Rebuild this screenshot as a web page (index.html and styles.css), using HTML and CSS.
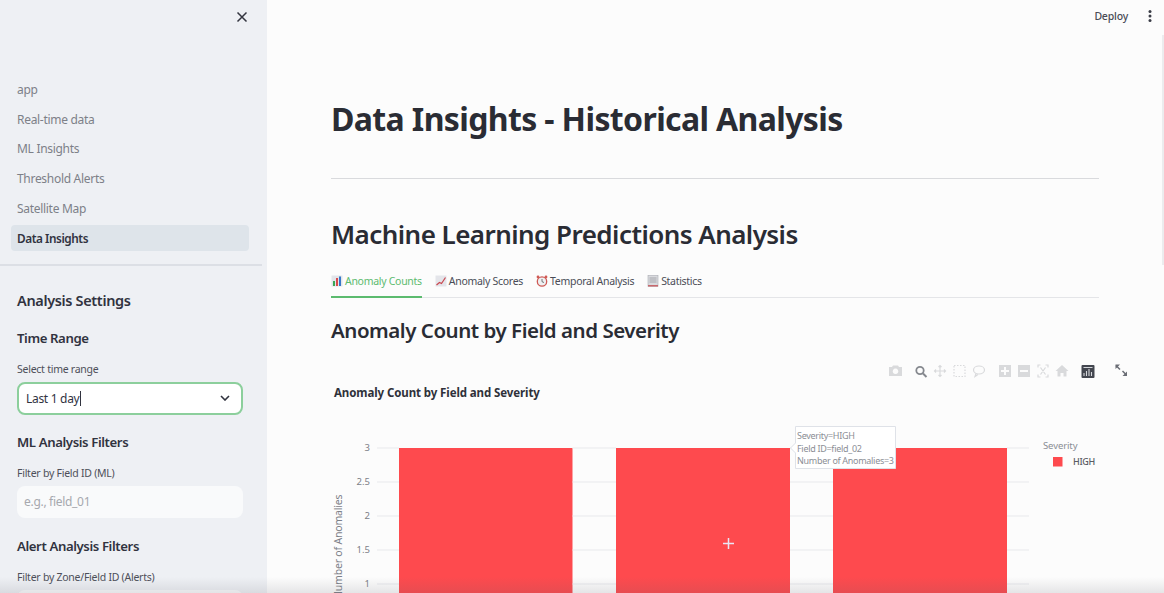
FILE: index.html
```html
<!DOCTYPE html>
<html lang="en">
<head>
<meta charset="utf-8">
<title>Data Insights</title>
<link rel="stylesheet" href="styles.css">
</head>
<body>
<div class="app">
  <aside class="sidebar">
    <div class="side-top">
      <svg class="close" viewBox="0 0 12 12" width="12" height="12"><path d="M1.500 1.500l9 9M10.500 1.500l-9 9" stroke="#33353f" stroke-width="1.500" fill="none"/></svg>
    </div>
    <nav class="nav">
      <a class="nav-item">app</a>
      <a class="nav-item">Real-time data</a>
      <a class="nav-item">ML Insights</a>
      <a class="nav-item">Threshold Alerts</a>
      <a class="nav-item">Satellite Map</a>
      <a class="nav-item active">Data Insights</a>
    </nav>
    <div class="side-rule"></div>
    <div class="side-body">
      <h2 class="side-h2">Analysis Settings</h2>
      <h3 class="side-h3 first">Time Range</h3>
      <div class="field-label">Select time range</div>
      <div class="select"><span class="select-value">Last 1 day</span><span class="caret"></span>
        <svg class="chev" viewBox="0 0 10 6" width="10" height="6"><path d="M1 1l4 4 4-4" stroke="#31333f" stroke-width="1.600" fill="none"/></svg>
      </div>
      <h3 class="side-h3">ML Analysis Filters</h3>
      <div class="field-label">Filter by Field ID (ML)</div>
      <div class="input">e.g., field_01</div>
      <h3 class="side-h3">Alert Analysis Filters</h3>
      <div class="field-label">Filter by Zone/Field ID (Alerts)</div>
      <div class="input"></div>
    </div>
  </aside>
  <main class="main">
    <header class="topbar">
      <span class="deploy">Deploy</span>
      <svg class="kebab" viewBox="0 0 4 14" width="4" height="14"><circle cx="2" cy="2.500" r="1.500"/><circle cx="2" cy="7" r="1.500"/><circle cx="2" cy="11.500" r="1.500"/></svg>
    </header>
    <div class="content">
      <h1 class="title">Data Insights - Historical Analysis</h1>
      <hr class="rule">
      <h2 class="section">Machine Learning Predictions Analysis</h2>
      <div class="tabs">
        <div class="tab on">
          <svg viewBox="0 0 12 12" width="12" height="12"><rect x=".5" y=".5" width="11" height="11" fill="#e2e5ea"/><rect x="2" y="6" width="2" height="5" fill="#3aa655"/><rect x="5" y="3" width="2" height="8" fill="#d9484c"/><rect x="8" y="1.500" width="2" height="9.500" fill="#3578c9"/></svg>
          Anomaly Counts</div>
        <div class="tab">
          <svg viewBox="0 0 12 12" width="12" height="12"><rect x=".5" y=".5" width="11" height="11" fill="#e4e5ea"/><path d="M1.500 10l3-2.500 2 1L10.500 2.500" stroke="#c9474f" stroke-width="1.200" fill="none"/></svg>
          Anomaly Scores</div>
        <div class="tab">
          <svg viewBox="0 0 12 12" width="12" height="12"><circle cx="6" cy="6.500" r="4.700" fill="#eef0f2" stroke="#cf5a55" stroke-width="1.300"/><path d="M6 4v2.700l2 .8" stroke="#555" stroke-width=".8" fill="none"/><circle cx="2" cy="2" r="1.400" fill="#cf5a55"/><circle cx="10" cy="2" r="1.400" fill="#cf5a55"/></svg>
          Temporal Analysis</div>
        <div class="tab">
          <svg viewBox="0 0 12 12" width="12" height="12"><rect x="1" y=".5" width="10" height="11" fill="#d9dade" stroke="#a9abb2" stroke-width=".6"/><path d="M2.500 3h7M2.500 5h7M2.500 7h7" stroke="#8f9199" stroke-width=".7"/><rect x="1" y="10" width="10" height="1.500" fill="#c9686c"/></svg>
          Statistics</div>
      </div>
      <h3 class="sub">Anomaly Count by Field and Severity</h3>
      <div class="chart">
        <svg class="plot" width="800" height="240" viewBox="331 355 800 240">
          <g class="bars">
            <rect x="399" y="448" width="173.500" height="150"/>
            <rect x="616" y="448" width="174" height="150"/>
            <rect x="833" y="448" width="174" height="150"/>
          </g>
          <g class="grid">
            <path d="M377 448H399M572.500 448H616M790 448H833M1007 448H1029"/>
            <path d="M377 482H399M572.500 482H616M790 482H833M1007 482H1029"/>
            <path d="M377 516H399M572.500 516H616M790 516H833M1007 516H1029"/>
            <path d="M377 550H399M572.500 550H616M790 550H833M1007 550H1029"/>
            <path d="M377 584H399M572.500 584H616M790 584H833M1007 584H1029"/>
          </g>
          <text class="chart-title" x="334" y="397">Anomaly Count by Field and Severity</text>
          <g class="ticks">
            <text x="370" y="451">3</text>
            <text x="370" y="485">2.5</text>
            <text x="370" y="519">2</text>
            <text x="370" y="553">1.5</text>
            <text x="370" y="587">1</text>
          </g>
          <text class="axis" transform="translate(342 599) rotate(-90)">Number of Anomalies</text>
          <path class="cross" d="M728.500 538v11M723 543.500h11"/>
          <text class="legend-title" x="1043" y="449">Severity</text>
          <rect x="1053" y="457" width="9.500" height="9.500" fill="#fe4a4e"/>
          <text class="legend-item" x="1073" y="465">HIGH</text>
          <path class="tip" d="M795.500 426.500H895.500V468.500H795.500V453L790.500 448L795.500 443Z"/>
          <text class="tip-text" x="797" y="439">Severity=HIGH</text>
          <text class="tip-text" x="797" y="452">Field ID=field_02</text>
          <text class="tip-text" x="797" y="464">Number of Anomalies=3</text>
          <g class="mode">
            <path d="M889 367h3l1-1.500h5l1 1.500h3v9h-13zM895.500 368.500a2.800 2.800 0 1 0 .01 0z" fill-rule="evenodd"/>
            <path d="M999 365h12v12h-12z M1004 367v3h-3v2h3v3h2v-3h3v-2h-3v-3z" fill-rule="evenodd"/>
            <path d="M1018 365h12v12h-12z M1020 370v2h8v-2z" fill-rule="evenodd"/>
            <path d="M1062 365l6.500 6h-2v5.500h-3v-3.500h-3v3.500h-3v-5.500h-2z"/>
          </g>
          <g class="mode-line">
            <path d="M940 365.500v11M934.500 371h11M938.500 367l1.500-1.500 1.500 1.500M938.500 375l1.500 1.500 1.500-1.500M936 369.500L934.500 371l1.500 1.500M944 369.500l1.500 1.500-1.500 1.500"/>
            <rect x="954" y="365.500" width="11" height="11" stroke-dasharray="1.500 1.500"/>
            <ellipse cx="979" cy="370" rx="5.500" ry="4"/>
            <path d="M976 373.500l-1 3 3-2"/>
            <path d="M1038 367.500v-2.500h2.500M1048 367.500v-2.500h-2.500M1038 374.500v2.500h2.500M1048 374.500v2.500h-2.500M1040.500 367.500l5 7M1045.500 367.500l-5 7"/>
          </g>
          <circle cx="920" cy="370.500" r="3.700" fill="none" stroke="#85888e" stroke-width="1.800"/>
          <path d="M923 373.500l3.500 3.500" stroke="#85888e" stroke-width="2"/>
          <rect x="1081.500" y="365" width="13" height="13" rx="1" fill="#43464f"/>
          <path d="M1084 376v-3M1086.500 376v-5M1089 376v-7M1091.500 376v-4M1083.500 367.500h9" stroke="#d5d7db" stroke-width="1.100" fill="none"/>
          <path d="M1116 365.500l4 4M1122.500 371l4 4" stroke="#6a6d75" stroke-width="1.500"/>
          <path d="M1115.500 364.500h4.500l-4.500 4.500zM1127 376h-4.500l4.500-4.500z" fill="#6a6d75"/>
        </svg>
      </div>
    </div>
    <div class="scroll-thumb"></div>
  </main>
  <div class="bottom-shade"></div>
</div>
</body>
</html>
```
FILE: styles.css
```css
* { box-sizing: border-box; }
html, body { margin: 0; height: 100%; overflow: hidden; }
body {
  font-family: "Noto Sans", "Liberation Sans", sans-serif;
  color: #31333f;
  background: #fcfcfc;
}
.app { display: flex; height: 593px; position: relative; overflow: hidden; }

/* sidebar */
.sidebar {
  width: 267px;
  flex: none;
  background: #eef0f4;
  overflow: hidden;
}
.side-top { height: 77px; display: flex; justify-content: flex-end; padding: 11px 19px 0 0; }
.close { display: block; }
.nav { display: flex; flex-direction: column; gap: 4px; padding: 0 18px 0 11px; }
.nav-item {
  height: 25.6px;
  padding-left: 6px;
  display: flex;
  align-items: center;
  font-size: 12px;
  letter-spacing: -0.3px;
  color: #7d8088;
  border-radius: 4px;
}
.nav-item.active { background: #dee4ea; color: #31333f; font-weight: 600; font-size: 11.8px; letter-spacing: -0.45px; }
.side-rule { height: 2px; margin: 13.4px 5px 0 0; background: #dcdfe5; }
.side-body { padding: 23px 24px 0 17px; }
.side-h2 { margin: 0; font-size: 14.500px; line-height: 22px; font-weight: 600; letter-spacing: -0.35px; }
.side-h3 { margin: 17px 0 0; font-size: 13.200px; line-height: 20px; font-weight: 600; letter-spacing: -0.4px; }
.side-h3.first { margin-top: 17px; }
.input + .side-h3 { margin-top: 18px; }
.field-label { margin-top: 13px; font-size: 10.500px; line-height: 16px; letter-spacing: -0.25px; color: #4d4f59; }
.select {
  margin-top: 5px;
  height: 33px;
  border: 2px solid #8ccf9c;
  border-radius: 8px;
  background: #fff;
  display: flex;
  align-items: center;
  padding: 0 11px 0 7px;
  font-size: 12px;
  letter-spacing: -0.3px;
}
.caret { width: 1px; height: 15px; background: #31333f; margin-left: 1px; }
.chev { margin-left: auto; }
.input {
  margin-top: 5px;
  height: 32px;
  border-radius: 8px;
  background: #f9fafb;
  padding: 0 7px;
  display: flex;
  align-items: center;
  font-size: 12px;
  letter-spacing: -0.3px;
  color: #a6a8ae;
}

/* main */
.main { flex: 1; min-width: 0; position: relative; overflow: hidden; }
.topbar { height: 32px; display: flex; justify-content: flex-end; align-items: center; gap: 20px; padding-right: 12px; }
.deploy { font-size: 10.500px; font-weight: 500; color: #4a4c56; letter-spacing: -0.2px; }
.kebab { fill: #3a3c46; }
.content { padding: 1px 65px 0 64px; }
.title { margin: 0; padding-top: 64px; font-size: 32px; line-height: 44px; font-weight: 700; letter-spacing: -0.63px; color: #2a2c34; }
.rule { margin: 37px 0 0; border: 0; height: 1px; background: #d9dadd; }
.section { margin: 37px 0 0; font-size: 26px; line-height: 36px; font-weight: 600; letter-spacing: -0.55px; color: #2a2c34; }
.tabs { margin-top: 20px; display: flex; gap: 13px; height: 26px; border-bottom: 1px solid #e4e5e8; }
.tab { display: flex; gap: 2px; height: 26px; padding-top: 2px; align-items: flex-start; font-size: 10.500px; line-height: 15px; letter-spacing: -0.29px; color: #4a4c56; white-space: nowrap; }
.tab svg { margin-top: 1px; }
.tab.on { color: #5cbb6f; border-bottom: 2px solid #5cbb6f; }
.sub { margin: 18px 0 0; font-size: 20.500px; line-height: 28px; font-weight: 600; letter-spacing: -0.47px; color: #2a2c34; }
.chart { margin-top: 11px; height: 250px; }
.plot { display: block; overflow: visible; }
.bars rect { fill: #fe4a4e; }
.grid path { stroke: #e8e9ec; stroke-width: 1; fill: none; }
.plot text { font-family: "Noto Sans", "Liberation Sans", sans-serif; }
.chart-title { font-size: 11.500px; font-weight: 700; fill: #2f313a; letter-spacing: -0.1px; }
.ticks text { font-size: 9.500px; fill: #7d8088; text-anchor: end; }
.axis { font-size: 10.500px; fill: #7d8088; letter-spacing: -0.2px; }
.cross { stroke: #e9e6f5; stroke-width: 1.500; fill: none; }
.legend-title { font-size: 9.500px; fill: #8a8d94; letter-spacing: -0.1px; }
.legend-item { font-size: 9px; fill: #5a5c64; font-weight: 500; letter-spacing: -0.3px; }
.tip { fill: #fff; stroke: #dfe2e8; stroke-width: 1; }
.tip-text { font-size: 9px; fill: #8b8e95; letter-spacing: -0.3px; }
.mode path { fill: #d9dadc; }
.mode-line path, .mode-line rect, .mode-line ellipse { fill: none; stroke: #d9dadc; stroke-width: 1.200; }
.scroll-thumb { position: absolute; right: 0; top: 35px; width: 2px; height: 230px; background: #ececee; }
.bottom-shade { position: absolute; left: 0; right: 0; bottom: 0; height: 16px; background: linear-gradient(to bottom, rgba(90,90,100,0), rgba(90,90,100,.14)); pointer-events: none; }
```
